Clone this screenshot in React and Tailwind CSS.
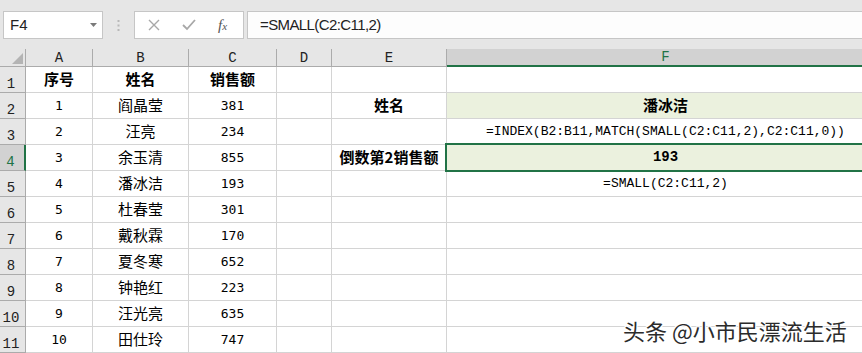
import React from 'react';

const rows = [
  ['序号', '姓名', '销售额'],
  ['1', '阎晶莹', '381'],
  ['2', '汪亮', '234'],
  ['3', '余玉清', '855'],
  ['4', '潘冰洁', '193'],
  ['5', '杜春莹', '301'],
  ['6', '戴秋霖', '170'],
  ['7', '夏冬寒', '652'],
  ['8', '钟艳红', '223'],
  ['9', '汪光亮', '635'],
  ['10', '田仕玲', '747'],
];

const cols = [
  { key: 'A', w: 'w-[67px]' },
  { key: 'B', w: 'w-[96px]' },
  { key: 'C', w: 'w-[88px]' },
  { key: 'D', w: 'w-[55px]' },
  { key: 'E', w: 'w-[115px]' },
  { key: 'F', w: 'w-[437px]' },
];

const cjk = { fontFamily: '"Noto Sans CJK SC", sans-serif' };
const mono = { fontFamily: '"Liberation Mono", "Noto Sans CJK SC", monospace' };
const digits = { fontFamily: '"DejaVu Sans Mono", monospace' };

const Cell = ({ w, className = '', children, style }) => (
  <div
    className={`${w} shrink-0 h-full border-r border-[#d4d4d4] flex items-center justify-center whitespace-nowrap text-black ${className}`}
    style={style}
  >
    {children}
  </div>
);

const renderValue = (v, bold) => {
  if (!v) return null;
  const numeric = /^\d+$/.test(v);
  if (numeric) {
    return (
      <span className="text-[13px]" style={digits}>
        {v}
      </span>
    );
  }
  return (
    <span className={`text-[15px] ${bold ? 'font-bold' : ''}`} style={cjk}>
      {v}
    </span>
  );
};

export default function App() {
  const rightCells = (i) => {
    // E and F column contents
    if (i === 1) {
      return {
        E: <span className="text-[15px] font-bold" style={cjk}>姓名</span>,
        F: <span className="text-[15px] font-bold" style={cjk}>潘冰洁</span>,
        fFill: true,
      };
    }
    if (i === 2) {
      return {
        F: <span className="text-[13px]" style={mono}>=INDEX(B2:B11,MATCH(SMALL(C2:C11,2),C2:C11,0))</span>,
      };
    }
    if (i === 3) {
      return {
        E: <span className="text-[15px] font-bold" style={cjk}>倒数第2销售额</span>,
        F: <span className="text-[14px] font-bold" style={mono}>193</span>,
        fFill: true,
        selected: true,
      };
    }
    if (i === 4) {
      return {
        F: <span className="text-[13px]" style={mono}>=SMALL(C2:C11,2)</span>,
      };
    }
    return {};
  };

  return (
    <div className="relative w-[862px] h-[353px] overflow-hidden bg-[#e6e6e6] select-none">
      {/* top band */}
      <div className="h-[11px] bg-[#e6e6e6]" />

      {/* formula bar */}
      <div className="h-[28px] flex items-stretch">
        <div className="ml-[3px] w-[100px] bg-white border border-[#c6c6c6] flex items-center justify-between pl-[6px] pr-[4px]">
          <span className="text-[15px] text-[#222]" style={{ fontFamily: '"Liberation Sans", sans-serif' }}>F4</span>
          <svg width="8" height="5" viewBox="0 0 8 5"><path d="M0 0 H7 L3.5 4 Z" fill="#7a7a7a" /></svg>
        </div>
        <div className="w-[31px] flex items-center justify-center">
          <svg width="3" height="11" viewBox="0 0 3 11">
            <rect x="0.5" y="0" width="2" height="2" fill="#b8b8b8" />
            <rect x="0.5" y="4.5" width="2" height="2" fill="#b8b8b8" />
            <rect x="0.5" y="9" width="2" height="2" fill="#b8b8b8" />
          </svg>
        </div>
        <div className="w-[110px] bg-white border border-[#c6c6c6] flex items-center pl-[13px] gap-[22px]">
          <svg width="12" height="12" viewBox="0 0 12 12">
            <path d="M1 1 L11 11 M11 1 L1 11" stroke="#a8a8a8" strokeWidth="1.4" />
          </svg>
          <svg width="14" height="12" viewBox="0 0 14 12">
            <path d="M1 6 L5 10 L13 1" stroke="#a8a8a8" strokeWidth="1.8" fill="none" />
          </svg>
          <span className="text-[15px] italic text-[#555] leading-none" style={{ fontFamily: '"Liberation Serif", serif' }}>
            f<span className="text-[11px]">x</span>
          </span>
        </div>
        <div className="ml-[3px] flex-1 bg-[#fdfdfd] border-y border-l border-[#c6c6c6] flex items-center pl-[12px]">
          <span className="text-[15px] text-[#222] tracking-[-0.6px]" style={{ fontFamily: '"Liberation Sans", sans-serif' }}>
            =SMALL(C2:C11,2)
          </span>
        </div>
      </div>

      {/* gap */}
      <div className="h-[10px]" />

      {/* column headers */}
      <div className="h-[18px] flex">
        <div className="w-[26px] shrink-0 border-r border-b border-[#ababab] bg-[#e6e6e6] flex items-end justify-end pr-[2px] pb-[2px]">
          <svg width="11" height="11" viewBox="0 0 11 11"><path d="M11 0 V11 H0 Z" fill="#b4b4b4" /></svg>
        </div>
        {cols.map((c) => {
          const active = c.key === 'F';
          return (
            <div
              key={c.key}
              className={`${c.w} shrink-0 flex items-end justify-center pb-[1px] text-[14px] leading-none ${
                active
                  ? 'bg-[#d2d2d2] border-b-2 border-[#217346] text-[#217346]'
                  : 'bg-[#e6e6e6] border-r border-b border-[#ababab] text-[#222]'
              }`}
              style={{ fontFamily: '"Liberation Mono", monospace' }}
            >
              {c.key}
            </div>
          );
        })}
      </div>

      {/* rows */}
      {rows.map((r, i) => {
        const extra = rightCells(i);
        const activeRow = i === 3;
        return (
          <div key={i} className="h-[26px] flex bg-white">
            <div
              className={`w-[26px] shrink-0 h-full border-b border-[#ababab] flex items-end justify-center pr-[3px] pb-[1px] text-[14px] leading-none ${
                activeRow
                  ? 'bg-[#d2d2d2] border-r-2 border-r-[#217346] text-[#217346]'
                  : 'bg-[#e6e6e6] border-r border-r-[#ababab] text-[#222]'
              }`}
              style={{ fontFamily: '"Liberation Mono", monospace' }}
            >
              {i + 1}
            </div>
            <div className="flex flex-1 border-b border-[#d4d4d4]">
              <Cell w={cols[0].w}>{renderValue(r[0], i === 0)}</Cell>
              <Cell w={cols[1].w}>{renderValue(r[1], i === 0)}</Cell>
              <Cell w={cols[2].w}>{renderValue(r[2], i === 0)}</Cell>
              <Cell w={cols[3].w} />
              <Cell w={cols[4].w}>{extra.E}</Cell>
              <div
                className={`relative ${cols[5].w} shrink-0 h-full flex items-center justify-center whitespace-nowrap text-black ${
                  extra.fFill ? 'bg-[#ebf1de]' : ''
                }`}
              >
                {extra.F}
                {extra.selected && (
                  <div className="absolute -left-[2px] -top-[2px] -bottom-[2px] right-0 border-2 border-[#217346] z-10" />
                )}
              </div>
            </div>
          </div>
        );
      })}

      {/* watermark */}
      <div
        className="absolute left-[623px] top-[317px] text-[22px] leading-[26px] text-[#2b2b2b] whitespace-nowrap z-20"
        style={{ ...cjk, textShadow: '1px 1px 0 #fff, -1px -1px 0 #fff, 1px -1px 0 #fff, -1px 1px 0 #fff' }}
      >
        头条 @小市民漂流生活
      </div>
    </div>
  );
}
